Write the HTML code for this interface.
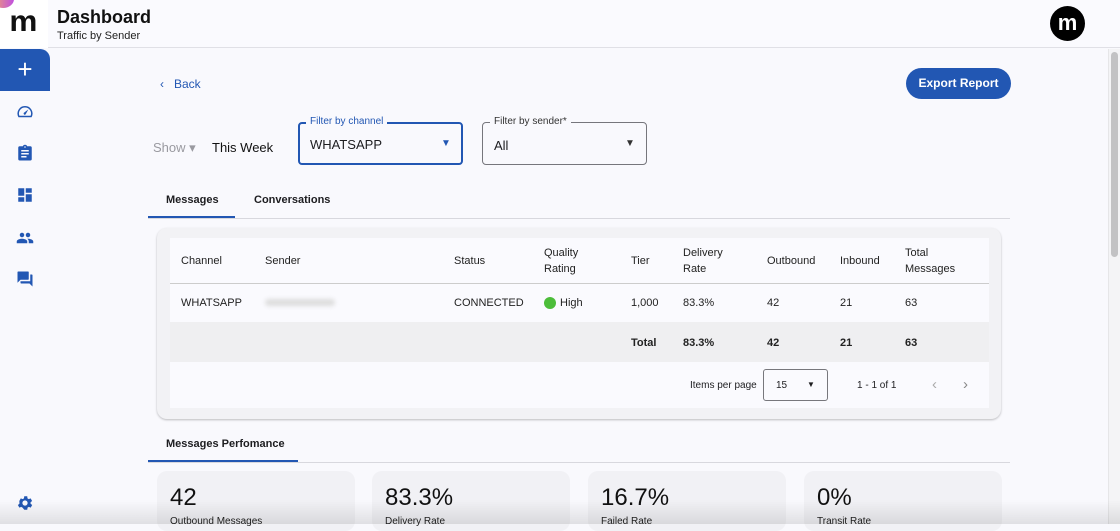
<!DOCTYPE html><html><head><style>
*{box-sizing:border-box;margin:0;padding:0}
body{width:1120px;height:524px;overflow:hidden;background:#f9f9fd;font-family:"Liberation Sans",sans-serif;color:#1d1d20;position:relative}
.a{position:absolute}
.hdr{left:0;top:0;width:1120px;height:48px;background:#fafafe;border-bottom:1px solid #e0e0e6}
.ic{left:16px;width:18px;height:18px}
.th{font-size:11px;color:#222;line-height:16px}
.td{font-size:11px;color:#222}
.b{font-weight:bold}
.stat{top:471px;width:198px;height:60px;background:#f1f1f5;border-radius:10px}
.stat .n{position:absolute;left:13px;top:13px;font-size:24px;color:#111}
.stat .l{position:absolute;left:13px;top:45px;font-size:10px;color:#222}
</style></head><body>
<div class="a hdr"></div>
<div class="a" style="left:0;top:0;width:48px;height:48px;background:#fff;overflow:hidden"><div class="a" style="left:-8px;top:-10px;width:22px;height:18px;border-radius:50%;background:linear-gradient(90deg,#f0a070,#c050e0)"></div><div class="a" style="left:10px;top:7px;font-size:30px;line-height:30px;font-weight:bold;color:#111;letter-spacing:-1px;transform:scaleX(1.05)">m</div></div>
<div class="a" style="left:57px;top:7px;font-size:18px;font-weight:bold;color:#111">Dashboard</div>
<div class="a" style="left:57px;top:30px;font-size:11px;color:#222">Traffic by Sender</div>
<div class="a" style="left:1050px;top:6px;width:35px;height:35px;border-radius:50%;background:#000;color:#fff;font-weight:bold;font-size:22px;text-align:center;line-height:33px">m</div>
<div class="a" style="left:0;top:49px;width:50px;height:42px;background:#2257b3;border-top-right-radius:10px;color:#fff;font-size:26px;text-align:center;line-height:40px">+</div>
<svg class="a ic" style="top:103px" viewBox="0 0 24 24" fill="#2257b3"><path d="M12 4a10 10 0 0 0-8.7 15h17.4A10 10 0 0 0 12 4zm0 2a8 8 0 0 1 7.5 11h-15A8 8 0 0 1 12 6zm4.5 2.5L11 12.6a1.6 1.6 0 1 0 2.3 1.8z"/></svg>
<svg class="a ic" style="top:144px" viewBox="0 0 24 24" fill="#2257b3"><path d="M19 3h-4.2A3 3 0 0 0 9.2 3H5a2 2 0 0 0-2 2v15a2 2 0 0 0 2 2h14a2 2 0 0 0 2-2V5a2 2 0 0 0-2-2zm-7 0a1 1 0 1 1 0 2 1 1 0 0 1 0-2zM7 8h10v2H7zm0 4h10v2H7zm0 4h7v2H7z"/></svg>
<svg class="a ic" style="top:186px" viewBox="0 0 24 24" fill="#2257b3"><path d="M3 13h8V3H3zm0 8h8v-6H3zm10 0h8V11h-8zm0-18v6h8V3z"/></svg>
<svg class="a ic" style="top:229px" viewBox="0 0 24 24" fill="#2257b3"><path d="M16 11a3 3 0 1 0 0-6 3 3 0 0 0 0 6zm-8 0a3 3 0 1 0 0-6 3 3 0 0 0 0 6zm0 2c-2.3 0-7 1.2-7 3.5V19h14v-2.5C15 14.2 10.3 13 8 13zm8 0h-1c1.2.8 2 2 2 3.5V19h6v-2.5c0-2.3-4.7-3.5-7-3.5z"/></svg>
<svg class="a ic" style="top:270px" viewBox="0 0 24 24" fill="#2257b3"><path d="M21 6h-2v9H6v2c0 .6.4 1 1 1h11l4 4V7c0-.6-.4-1-1-1zm-4 6V3c0-.6-.4-1-1-1H3c-.6 0-1 .4-1 1v14l4-4h10c.6 0 1-.4 1-1z"/></svg>
<svg class="a ic" style="top:494px" viewBox="0 0 24 24" fill="#2257b3"><path d="M19.4 13a7.5 7.5 0 0 0 0-2l2.1-1.6-2-3.5-2.5 1a7 7 0 0 0-1.7-1L15 3h-4l-.4 2.9a7 7 0 0 0-1.7 1l-2.5-1-2 3.5L4.6 11a7.5 7.5 0 0 0 0 2l-2.1 1.6 2 3.5 2.5-1a7 7 0 0 0 1.7 1L11 21h4l.4-2.9a7 7 0 0 0 1.7-1l2.5 1 2-3.5zM12 15.5a3.5 3.5 0 1 1 0-7 3.5 3.5 0 0 1 0 7z"/></svg>
<div class="a" style="left:160px;top:77px;font-size:12px;color:#2257b3">‹&nbsp;&nbsp;&nbsp;Back</div>
<div class="a" style="left:906px;top:68px;width:105px;height:31px;border-radius:16px;background:#2257b3;color:#fff;font-size:12px;font-weight:bold;text-align:center;line-height:31px">Export Report</div>
<div class="a" style="left:153px;top:140px;font-size:13px;color:#9a9aa0">Show ▾</div>
<div class="a" style="left:212px;top:140px;font-size:13px;color:#111">This Week</div>
<div class="a" style="left:298px;top:122px;width:165px;height:43px;border:2px solid #2257b3;border-radius:4px"></div>
<div class="a" style="left:306px;top:116px;padding:0 4px;background:#f9f9fd;font-size:10px;color:#2257b3">Filter by channel</div>
<div class="a" style="left:310px;top:137px;font-size:13px">WHATSAPP</div>
<div class="a" style="left:441px;top:138px;font-size:10px;color:#2257b3">▼</div>
<div class="a" style="left:482px;top:122px;width:165px;height:43px;border:1px solid #76767c;border-radius:4px"></div>
<div class="a" style="left:490px;top:116px;padding:0 4px;background:#f9f9fd;font-size:10px;color:#333">Filter by sender*</div>
<div class="a" style="left:494px;top:138px;font-size:13px">All</div>
<div class="a" style="left:625px;top:138px;font-size:10px;color:#333">▼</div>
<div class="a" style="left:148px;top:218px;width:862px;height:1px;background:#d8d8de"></div>
<div class="a" style="left:148px;top:216px;width:87px;height:2px;background:#2257b3"></div>
<div class="a" style="left:166px;top:194px;font-size:11px;font-weight:bold">Messages</div>
<div class="a" style="left:254px;top:194px;font-size:11px;font-weight:bold">Conversations</div>
<div class="a" style="left:157px;top:228px;width:844px;height:191px;background:#f2f2f5;border-radius:10px;box-shadow:0 1px 2px rgba(0,0,0,.25)"></div>
<div class="a" style="left:170px;top:238px;width:819px;height:170px;background:#fafafe"></div>
<div class="a" style="left:170px;top:283px;width:819px;height:1px;background:#ccc"></div>
<div class="a" style="left:170px;top:322px;width:819px;height:40px;background:#efeff1"></div>
<div class="a th" style="left:181px;top:253px">Channel</div>
<div class="a th" style="left:265px;top:253px">Sender</div>
<div class="a th" style="left:454px;top:253px">Status</div>
<div class="a th" style="left:544px;top:245px">Quality<br>Rating</div>
<div class="a th" style="left:631px;top:253px">Tier</div>
<div class="a th" style="left:683px;top:245px">Delivery<br>Rate</div>
<div class="a th" style="left:767px;top:253px">Outbound</div>
<div class="a th" style="left:840px;top:253px">Inbound</div>
<div class="a th" style="left:905px;top:245px">Total<br>Messages</div>
<div class="a td" style="left:181px;top:297px">WHATSAPP</div>
<div class="a" style="left:265px;top:299px;width:70px;height:7px;background:#ddd;border-radius:4px;filter:blur(2px)"></div>
<div class="a td" style="left:454px;top:297px">CONNECTED</div>
<div class="a" style="left:544px;top:297px;width:12px;height:12px;border-radius:50%;background:#4cbd3a"></div>
<div class="a td" style="left:560px;top:297px">High</div>
<div class="a td" style="left:631px;top:297px">1,000</div>
<div class="a td" style="left:683px;top:297px">83.3%</div>
<div class="a td" style="left:767px;top:297px">42</div>
<div class="a td" style="left:840px;top:297px">21</div>
<div class="a td" style="left:905px;top:297px">63</div>
<div class="a td b" style="left:631px;top:337px">Total</div>
<div class="a td b" style="left:683px;top:337px">83.3%</div>
<div class="a td b" style="left:767px;top:337px">42</div>
<div class="a td b" style="left:840px;top:337px">21</div>
<div class="a td b" style="left:905px;top:337px">63</div>
<div class="a" style="left:690px;top:380px;font-size:10px">Items per page</div>
<div class="a" style="left:763px;top:369px;width:65px;height:32px;border:1px solid #77777c;border-radius:3px"></div>
<div class="a" style="left:776px;top:380px;font-size:10px">15</div>
<div class="a" style="left:807px;top:380px;font-size:8px">▼</div>
<div class="a" style="left:857px;top:380px;font-size:10px">1 - 1 of 1</div>
<div class="a" style="left:932px;top:376px;font-size:15px;color:#aaa">‹</div>
<div class="a" style="left:963px;top:376px;font-size:15px;color:#888">›</div>
<div class="a" style="left:148px;top:462px;width:862px;height:1px;background:#d8d8de"></div>
<div class="a" style="left:148px;top:460px;width:150px;height:2px;background:#2257b3"></div>
<div class="a" style="left:166px;top:438px;font-size:11px;font-weight:bold">Messages Perfomance</div>
<div class="a stat" style="left:157px"><div class="n">42</div><div class="l">Outbound Messages</div></div>
<div class="a stat" style="left:372px"><div class="n">83.3%</div><div class="l">Delivery Rate</div></div>
<div class="a stat" style="left:588px"><div class="n">16.7%</div><div class="l">Failed Rate</div></div>
<div class="a stat" style="left:804px"><div class="n">0%</div><div class="l">Transit Rate</div></div>
<div class="a" style="left:1108px;top:49px;width:12px;height:475px;background:#f4f4f6;border-left:1px solid #e6e6e8"></div>
<div class="a" style="left:1111px;top:52px;width:7px;height:205px;background:#c2c2c4;border-radius:4px"></div>
<div class="a" style="left:0;top:500px;width:1120px;height:24px;background:linear-gradient(rgba(0,0,0,0),rgba(0,0,0,.10))"></div>
</body></html>
